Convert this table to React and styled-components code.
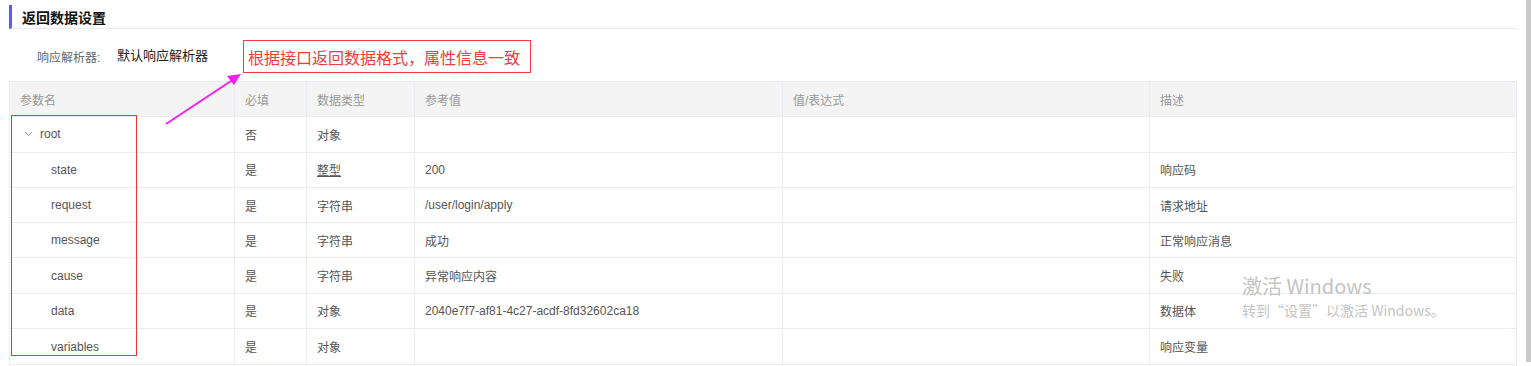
import React from 'react';
import styled, { createGlobalStyle } from 'styled-components';

const GlobalStyle = createGlobalStyle`
  html, body {
    margin: 0;
    padding: 0;
    background: #fff;
    overflow: hidden;
  }
  body {
    font-family: "Liberation Sans", "Noto Sans CJK SC", Arial, sans-serif;
    font-size: 12px;
    color: #555;
  }
`;

const Page = styled.div`
  position: relative;
  display: flex;
  width: 1531px;
  height: 366px;
`;

const Main = styled.div`
  flex: 1;
  padding: 5px 9px 0 9px;
  min-width: 0;
`;

const ScrollTrack = styled.div`
  width: 5px;
  height: 362px;
  background: #c9c9c9;
`;

const SectionTitle = styled.div`
  display: flex;
  align-items: center;
  height: 23px;
  border-left: 3px solid #5b5bf7;
  padding-left: 10px;
  font-size: 14px;
  font-weight: bold;
  color: #111;
  border-bottom: 1px solid #e8e9f2;
`;

const ParserRow = styled.div`
  display: flex;
  align-items: center;
  height: 33px;
  margin-top: 11px;
  margin-bottom: 8px;
`;

const ParserLabel = styled.span`
  margin-left: 28px;
  width: 80px;
  color: #666;
  font-size: 12px;
`;

const ParserValue = styled.span`
  width: 126px;
  color: #222;
  font-size: 13px;
  margin-top: -4px;
`;

const Callout = styled.div`
  box-sizing: border-box;
  height: 33px;
  width: 288px;
  border: 1px solid #f03c3c;
  color: #f23a3a;
  font-size: 16px;
  display: flex;
  align-items: center;
  padding-left: 4px;
  font-family: "Noto Sans CJK SC", sans-serif;
`;

const Table = styled.div`
  border: 1px solid #ebecf3;
  display: grid;
  grid-template-columns: 225px 72px 108px 368px 367px 1fr;
`;

const Cell = styled.div`
  box-sizing: border-box;
  height: 35.3px;
  display: flex;
  align-items: center;
  padding-left: ${p => p.indent || 10}px;
  border-right: ${p => (p.last ? 'none' : '1px solid #ebecf3')};
  border-bottom: ${p => (p.bottom ? 'none' : '1px solid #ebecf3')};
  background: ${p => (p.head ? '#f4f4f4' : '#fff')};
  color: ${p => (p.head ? '#999' : '#555')};
  font-size: 12px;
  white-space: nowrap;
  text-decoration: ${p => (p.underline ? 'underline' : 'none')};
`;

const Chevron = styled.svg`
  width: 9px;
  height: 6px;
  margin-right: 7px;
`;

const NameBox = styled.div`
  position: absolute;
  left: 11px;
  top: 115px;
  width: 126px;
  height: 241px;
  box-sizing: border-box;
  border: 1px solid #ee3333;
  pointer-events: none;
`;

const Arrow = styled.svg`
  position: absolute;
  left: 160px;
  top: 66px;
  width: 90px;
  height: 64px;
  overflow: visible;
`;

const Watermark = styled.div`
  position: absolute;
  left: 1242px;
  top: 276px;
  color: #c4c4c4;
  font-family: "Noto Sans CJK SC", sans-serif;
  line-height: 1;
`;

const WatermarkTitle = styled.div`
  font-size: 20px;
  margin-bottom: 7px;
`;

const WatermarkSub = styled.div`
  font-size: 14px;
`;

const headers = ['参数名', '必填', '数据类型', '参考值', '值/表达式', '描述'];

const rows = [
  { name: 'root', root: true, req: '否', type: '对象', ref: '', expr: '', desc: '' },
  { name: 'state', req: '是', type: '整型', ref: '200', expr: '', desc: '响应码', underline: true },
  { name: 'request', req: '是', type: '字符串', ref: '/user/login/apply', expr: '', desc: '请求地址' },
  { name: 'message', req: '是', type: '字符串', ref: '成功', expr: '', desc: '正常响应消息' },
  { name: 'cause', req: '是', type: '字符串', ref: '异常响应内容', expr: '', desc: '失败' },
  { name: 'data', req: '是', type: '对象', ref: '2040e7f7-af81-4c27-acdf-8fd32602ca18', expr: '', desc: '数据体' },
  { name: 'variables', req: '是', type: '对象', ref: '', expr: '', desc: '响应变量' },
];

export default function App() {
  return (
    <>
      <GlobalStyle />
      <Page>
        <Main>
          <SectionTitle>返回数据设置</SectionTitle>
          <ParserRow>
            <ParserLabel>响应解析器:</ParserLabel>
            <ParserValue>默认响应解析器</ParserValue>
            <Callout>根据接口返回数据格式，属性信息一致</Callout>
          </ParserRow>
          <Table>
            {headers.map((h, i) => (
              <Cell key={h} head last={i === headers.length - 1}>{h}</Cell>
            ))}
            {rows.map((r, ri) => {
              const bottom = ri === rows.length - 1;
              return (
                <React.Fragment key={r.name}>
                  <Cell indent={r.root ? 14 : 41} bottom={bottom}>
                    {r.root && (
                      <Chevron viewBox="0 0 9 6">
                        <path d="M1 1 L4.5 4.5 L8 1" fill="none" stroke="#999" strokeWidth="1" />
                      </Chevron>
                    )}
                    {r.name}
                  </Cell>
                  <Cell bottom={bottom}>{r.req}</Cell>
                  <Cell bottom={bottom} underline={r.underline}>{r.type}</Cell>
                  <Cell bottom={bottom}>{r.ref}</Cell>
                  <Cell bottom={bottom}>{r.expr}</Cell>
                  <Cell bottom={bottom} last>{r.desc}</Cell>
                </React.Fragment>
              );
            })}
          </Table>
        </Main>
        <ScrollTrack />
        <NameBox />
        <Arrow viewBox="0 0 90 64">
          <line x1="6" y1="58" x2="74" y2="13" stroke="#ee22ee" strokeWidth="2" />
          <polygon points="81,8 67,10 74,19" fill="#ee22ee" />
        </Arrow>
        <Watermark>
          <WatermarkTitle>激活 Windows</WatermarkTitle>
          <WatermarkSub>转到“设置”以激活 Windows。</WatermarkSub>
        </Watermark>
      </Page>
    </>
  );
}
